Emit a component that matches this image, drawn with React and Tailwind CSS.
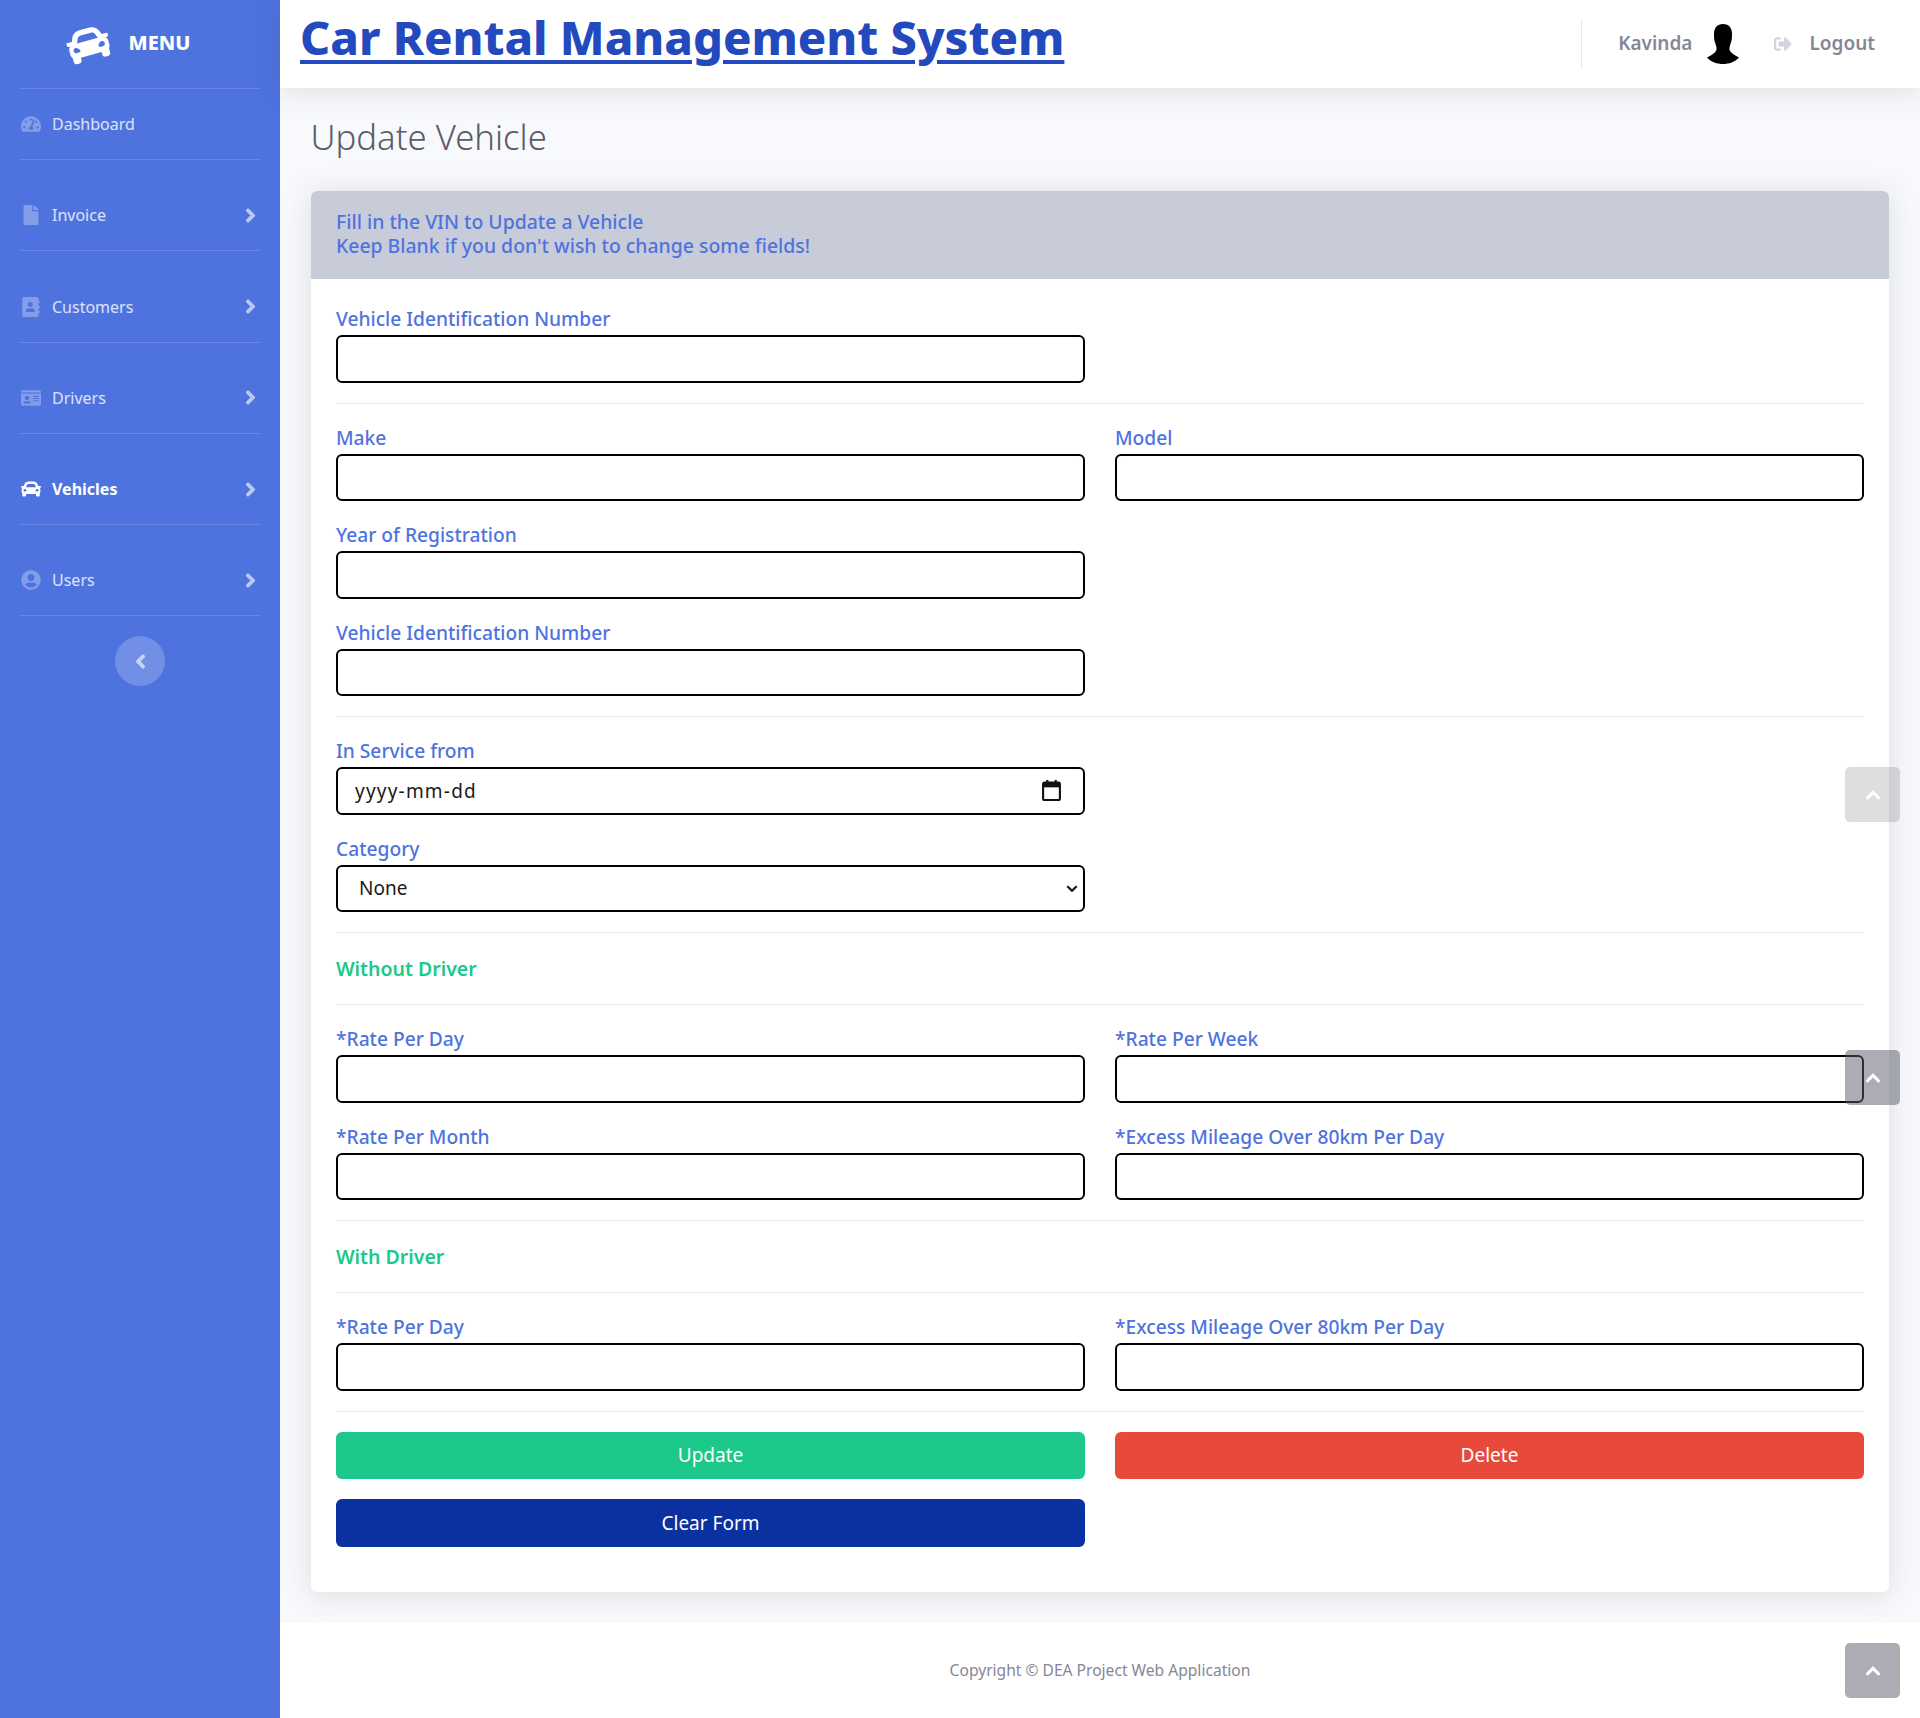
import {
  FaCar,
  FaTachometerAlt,
  FaFile,
  FaAddressBook,
  FaIdCard,
  FaUserCircle,
  FaChevronRight,
  FaChevronLeft,
  FaChevronUp,
  FaSignOutAlt,
} from "react-icons/fa";

const font = "font-['Noto_Sans',sans-serif]";

const navItems = [
  { label: "Dashboard", icon: FaTachometerAlt, rowClass: "h-[71px]", arrow: false },
  { label: "Invoice", icon: FaFile, rowClass: "h-[91.25px]", arrow: true },
  { label: "Customers", icon: FaAddressBook, rowClass: "h-[91.25px]", arrow: true },
  { label: "Drivers", icon: FaIdCard, rowClass: "h-[91.25px]", arrow: true },
  { label: "Vehicles", icon: FaCar, rowClass: "h-[91.25px]", arrow: true, active: true },
  { label: "Users", icon: FaUserCircle, rowClass: "h-[91.25px]", arrow: true },
];

const Sidebar = () => {
  return (
    <aside className="w-[280px] shrink-0 bg-[#4e73df] px-5">
      <div className="flex h-[89px] items-center justify-center gap-[19px] border-b border-white/15 pr-[23px]">
        <FaCar className="-rotate-[15deg] text-[43px] text-white" />
        <span className="-mt-[2px] text-[20px] font-extrabold text-white">MENU</span>
      </div>
      {navItems.map((item) => {
        const Icon = item.icon;
        return (
          <div key={item.label} className={`${item.rowClass} flex items-end border-b border-white/15 pb-[23px]`}>
            <div className="flex h-6 w-8 items-center justify-center pl-[1px] pr-[12px]">
              <Icon className={`shrink-0 text-[20px] ${item.active ? "text-white" : "text-white/30"}`} />
            </div>
            <span className={`text-[16px] leading-6 ${item.active ? "font-bold text-white" : "text-white/80"}`}>
              {item.label}
            </span>
            {item.arrow && (
              <div className="ml-auto mr-[2px] flex h-6 items-center">
                <FaChevronRight className="stroke-[50] text-[15px] text-white/50" />
              </div>
            )}
          </div>
        );
      })}
      <div className="flex justify-center pt-[20px]">
        <button className="flex h-[50px] w-[50px] items-center justify-center rounded-full bg-white/20">
          <FaChevronLeft className="stroke-[50] text-[15px] text-white/50" />
        </button>
      </div>
    </aside>
  );
};

const Topbar = () => {
  return (
    <header className="relative z-10 flex h-[88px] items-center bg-white pl-[20px] pr-[45px] shadow-[0_2.4px_28px_0_rgba(58,59,69,0.15)]">
      <a href="#" className="-mt-[14px] text-[47px] font-extrabold leading-none text-[#224abe] underline decoration-[4px] underline-offset-[5px]">
        Car Rental Management System
      </a>
      <div className="ml-auto flex h-[48px] items-center border-l border-[#e3e6f0] pl-[36px]">
        <span className="-mt-[2px] text-[19px] font-semibold text-[#858796]">Kavinda</span>
        <svg viewBox="0 0 32 40" className="ml-[15px] h-[40px] w-[32px]">
          <path d="M16 0C22 0 25 4 25 10C25 14 25 16 23.5 20C22.5 23 22 25 23 27C25 30 29 32 32 33.5C28 38 22 40 16 40C10 40 4 38 0 33.5C3 32 7 30 9 27C10 25 9.5 23 8.5 20C7 16 7 14 7 10C7 4 10 0 16 0Z" fill="#000" />
        </svg>
        <FaSignOutAlt className="ml-[35px] text-[18px] text-[#d1d3e2]" />
        <span className="-mt-[2px] ml-[17px] text-[19px] font-semibold text-[#858796]">Logout</span>
      </div>
    </header>
  );
};

const labelClass = "mb-[4px] block text-[19.2px] font-medium leading-[24px] text-[#4e73df]";
const inputClass = "block h-[47.5px] w-full rounded-[6px] border-2 border-black bg-white px-4 text-[19px] text-[#1a1a1a]";

const Field = ({ label }) => {
  return (
    <div className="pt-[2px]">
      <label className={labelClass}>{label}</label>
      <input type="text" className={inputClass} />
    </div>
  );
};

// the browser prints the native date box in its own locale, so this one is a text box with the icon on top
const DateField = ({ label }) => {
  return (
    <div className="pt-[2px]">
      <label className={labelClass}>{label}</label>
      <div className="relative">
        <input type="text" placeholder="yyyy-mm-dd" className={`${inputClass} pl-[17px] tracking-[1.2px] placeholder:text-[#1a1a1a]`} />
        <svg viewBox="0 0 18 20" className="absolute right-[24px] top-[13px] h-[21px] w-[19px]" fill="none">
          <path d="M5 0v3M13 0v3" stroke="#111" strokeWidth="2" />
          <rect x="1" y="2.5" width="16" height="16.5" rx="1.5" stroke="#111" strokeWidth="2" />
          <rect x="1" y="2.5" width="16" height="4.5" fill="#111" />
        </svg>
      </div>
    </div>
  );
};

const SelectField = ({ label }) => {
  return (
    <div className="pt-[2px]">
      <label className={labelClass}>{label}</label>
      <div className="relative">
        <select className={`${inputClass} appearance-none pl-[21px] pr-5`}>
          <option>None</option>
        </select>
        <svg viewBox="0 0 10 6" className="absolute right-[7px] top-[20px] h-[7px] w-[12px]" fill="none">
          <path d="M1 1l4 4 4-4" stroke="#111" strokeWidth="1.8" />
        </svg>
      </div>
    </div>
  );
};

const Divider = () => <hr className="border-t border-[#e3e6f0]" />;

const Row = ({ children }) => <div className="grid grid-cols-2 gap-x-[30px]">{children}</div>;

const GreenHeading = ({ children }) => (
  <div className="flex h-[31px] items-center text-[19.5px] font-semibold text-[#1cc88a]">{children}</div>
);

const UpdateForm = () => {
  return (
    <form className="flex flex-col gap-5">
      <Row>
        <Field label="Vehicle Identification Number" />
      </Row>
      <Divider />
      <Row>
        <Field label="Make" />
        <Field label="Model" />
      </Row>
      <Row>
        <Field label="Year of Registration" />
      </Row>
      <Row>
        <Field label="Vehicle Identification Number" />
      </Row>
      <Divider />
      <Row>
        <DateField label="In Service from" />
      </Row>
      <Row>
        <SelectField label="Category" />
      </Row>
      <Divider />
      <GreenHeading>Without Driver</GreenHeading>
      <Divider />
      <Row>
        <Field label="*Rate Per Day" />
        <Field label="*Rate Per Week" />
      </Row>
      <Row>
        <Field label="*Rate Per Month" />
        <Field label="*Excess Mileage Over 80km Per Day" />
      </Row>
      <Divider />
      <GreenHeading>With Driver</GreenHeading>
      <Divider />
      <Row>
        <Field label="*Rate Per Day" />
        <Field label="*Excess Mileage Over 80km Per Day" />
      </Row>
      <Divider />
      <Row>
        <button type="button" className="h-[47.5px] rounded-[6px] bg-[#1cc88a] text-[19px] text-white">Update</button>
        <button type="button" className="h-[47.5px] rounded-[6px] bg-[#e74a3b] text-[19px] text-white">Delete</button>
      </Row>
      <Row>
        <button type="button" className="h-[47.5px] rounded-[6px] bg-[#0b30a0] text-[19px] text-white">Clear Form</button>
      </Row>
    </form>
  );
};

const ScrollTop = ({ className }) => (
  <div className={`absolute right-5 flex h-[55px] w-[55px] items-center justify-center rounded-[5px] ${className}`}>
    <FaChevronUp className="stroke-[30] text-[16px] text-white" />
  </div>
);

export default function App() {
  return (
    <div className={`relative flex min-h-[1718px] bg-[#f8f9fc] ${font}`}>
      <Sidebar />
      <div className="flex min-w-0 flex-1 flex-col">
        <Topbar />
        <main className="flex-1 pl-[30.5px] pr-[31px]">
          <h1 className="mb-[4px] flex h-[99px] items-center text-[34.7px] font-light text-[#5a5c69]">Update Vehicle</h1>
          <section className="rounded-[6px] bg-white shadow-[0_2.4px_28px_0_rgba(58,59,69,0.15)]">
            <div className="h-[88px] rounded-t-[6px] bg-[#c8ccd8] pl-[25.5px] pr-[25px] pt-[19px] text-[19.4px] font-medium leading-[24px] text-[#4e73df]">
              <p>Fill in the VIN to Update a Vehicle</p>
              <p>Keep Blank if you don't wish to change some fields!</p>
            </div>
            <div className="pb-[45.5px] pl-[25.5px] pr-[25px] pt-[26px]">
              <UpdateForm />
            </div>
          </section>
        </main>
        <footer className="relative mt-[31px] flex h-[95px] items-center justify-center bg-white text-[15.6px] text-[#858796]">
          Copyright © DEA Project Web Application
        </footer>
      </div>
      <ScrollTop className="top-[767px] bg-[#5a5c69]/20" />
      <ScrollTop className="top-[1050px] bg-[#5a5c69]/50" />
      <ScrollTop className="top-[1643px] bg-[#5a5c69]/50" />
    </div>
  );
}
